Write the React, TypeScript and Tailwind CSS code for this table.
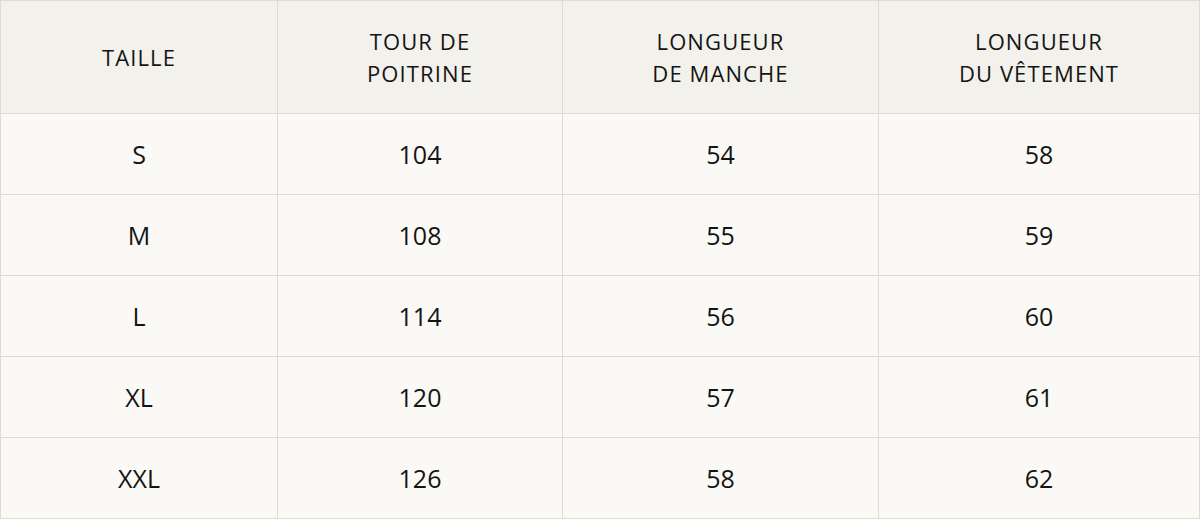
import React from 'react';

const headers = [
  ['TAILLE'],
  ['TOUR DE', 'POITRINE'],
  ['LONGUEUR', 'DE MANCHE'],
  ['LONGUEUR', 'DU VÊTEMENT'],
];

const rows = [
  ['S', '104', '54', '58'],
  ['M', '108', '55', '59'],
  ['L', '114', '56', '60'],
  ['XL', '120', '57', '61'],
  ['XXL', '126', '58', '62'],
];

export default function App() {
  return (
    <div className="h-[520px] w-[1200px] bg-white font-['Open_Sans',sans-serif] text-[#141414]">
      <table className="w-full table-fixed border-collapse border border-[#dedbd5]">
        <colgroup>
          <col className="w-[277px]" />
          <col className="w-[285px]" />
          <col className="w-[316px]" />
          <col />
        </colgroup>
        <thead>
          <tr className="h-[113px] bg-[#f3f1eb]">
            {headers.map((lines, i) => (
              <th
                key={i}
                className="border border-[#dedbd5] text-center text-[22px] font-normal leading-[32px] tracking-[0.05em]"
              >
                {lines.map((l) => (
                  <div key={l}>{l}</div>
                ))}
              </th>
            ))}
          </tr>
        </thead>
        <tbody>
          {rows.map((r) => (
            <tr key={r[0]} className="h-[81px] bg-[#faf9f6]">
              {r.map((c, j) => (
                <td
                  key={j}
                  className="border border-[#dedbd5] text-center text-[25px] leading-none"
                >
                  {c}
                </td>
              ))}
            </tr>
          ))}
        </tbody>
      </table>
    </div>
  );
}
